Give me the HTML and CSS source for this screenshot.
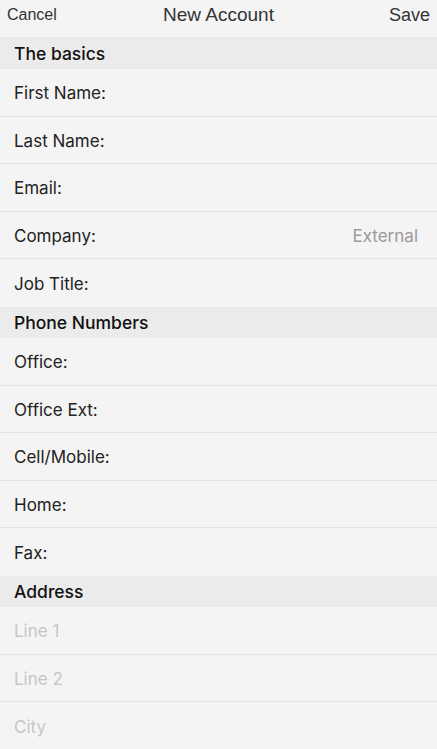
FILE: index.html
```html
<!DOCTYPE html>
<html lang="en">
<head>
    <meta charset="UTF-8">
    <title>New Account</title>
    <meta name="viewport" content="width=device-width,initial-scale=1">
    <link rel="stylesheet" href="styles.css">
</head>
<body>
    <div class="topbar">
        <span class="cancel">Cancel</span>
        <span class="title">New Account</span>
        <span class="save">Save</span>
    </div>

    <div class="section first">The basics</div>
    <div class="group">
        <div class="row">First Name:</div>
        <div class="row">Last Name:</div>
        <div class="row">Email:</div>
        <div class="row">Company:<span class="value">External</span></div>
        <div class="row">Job Title:</div>
    </div>

    <div class="section">Phone Numbers</div>
    <div class="group">
        <div class="row">Office:</div>
        <div class="row">Office Ext:</div>
        <div class="row">Cell/Mobile:</div>
        <div class="row">Home:</div>
        <div class="row">Fax:</div>
    </div>

    <div class="section">Address</div>
    <div class="group">
        <div class="row hint">Line 1</div>
        <div class="row hint">Line 2</div>
        <div class="row hint">City</div>
    </div>
</body>
</html>
```

FILE: styles.css
```css
html,body{
    margin:0;
    padding:0;
}
body{
    background:#f4f4f4;
    font-family:Inter,"Noto Sans",sans-serif;
    color:#222;
    overflow:hidden;
}
.topbar{
    height:37px;
    display:grid;
    grid-template-columns:1fr auto 1fr;
    align-items:center;
    padding:0 7px 7px 7px;
    box-sizing:border-box;
    font-family:"Liberation Sans",Arial,sans-serif;
    color:#333;
}
.cancel{
    font-size:16px;
    justify-self:start;
}
.title{
    font-size:19px;
}
.save{
    font-size:18px;
    justify-self:end;
}
.section{
    height:31px;
    background:#ebebeb;
    display:flex;
    align-items:center;
    padding-left:14px;
    font-size:17.5px;
    font-weight:500;
    color:#111;
}
.section.first{
    height:32px;
}
.row{
    height:47.6px;
    box-sizing:border-box;
    border-bottom:1px solid #e3e3e3;
    display:flex;
    align-items:center;
    justify-content:space-between;
    padding:2px 19px 0 14px;
    font-size:17px;
}
.group .row:last-child{
    border-bottom:none;
}
.value{
    color:#9a9a9a;
}
.hint{
    color:#c6c6c6;
}
```
